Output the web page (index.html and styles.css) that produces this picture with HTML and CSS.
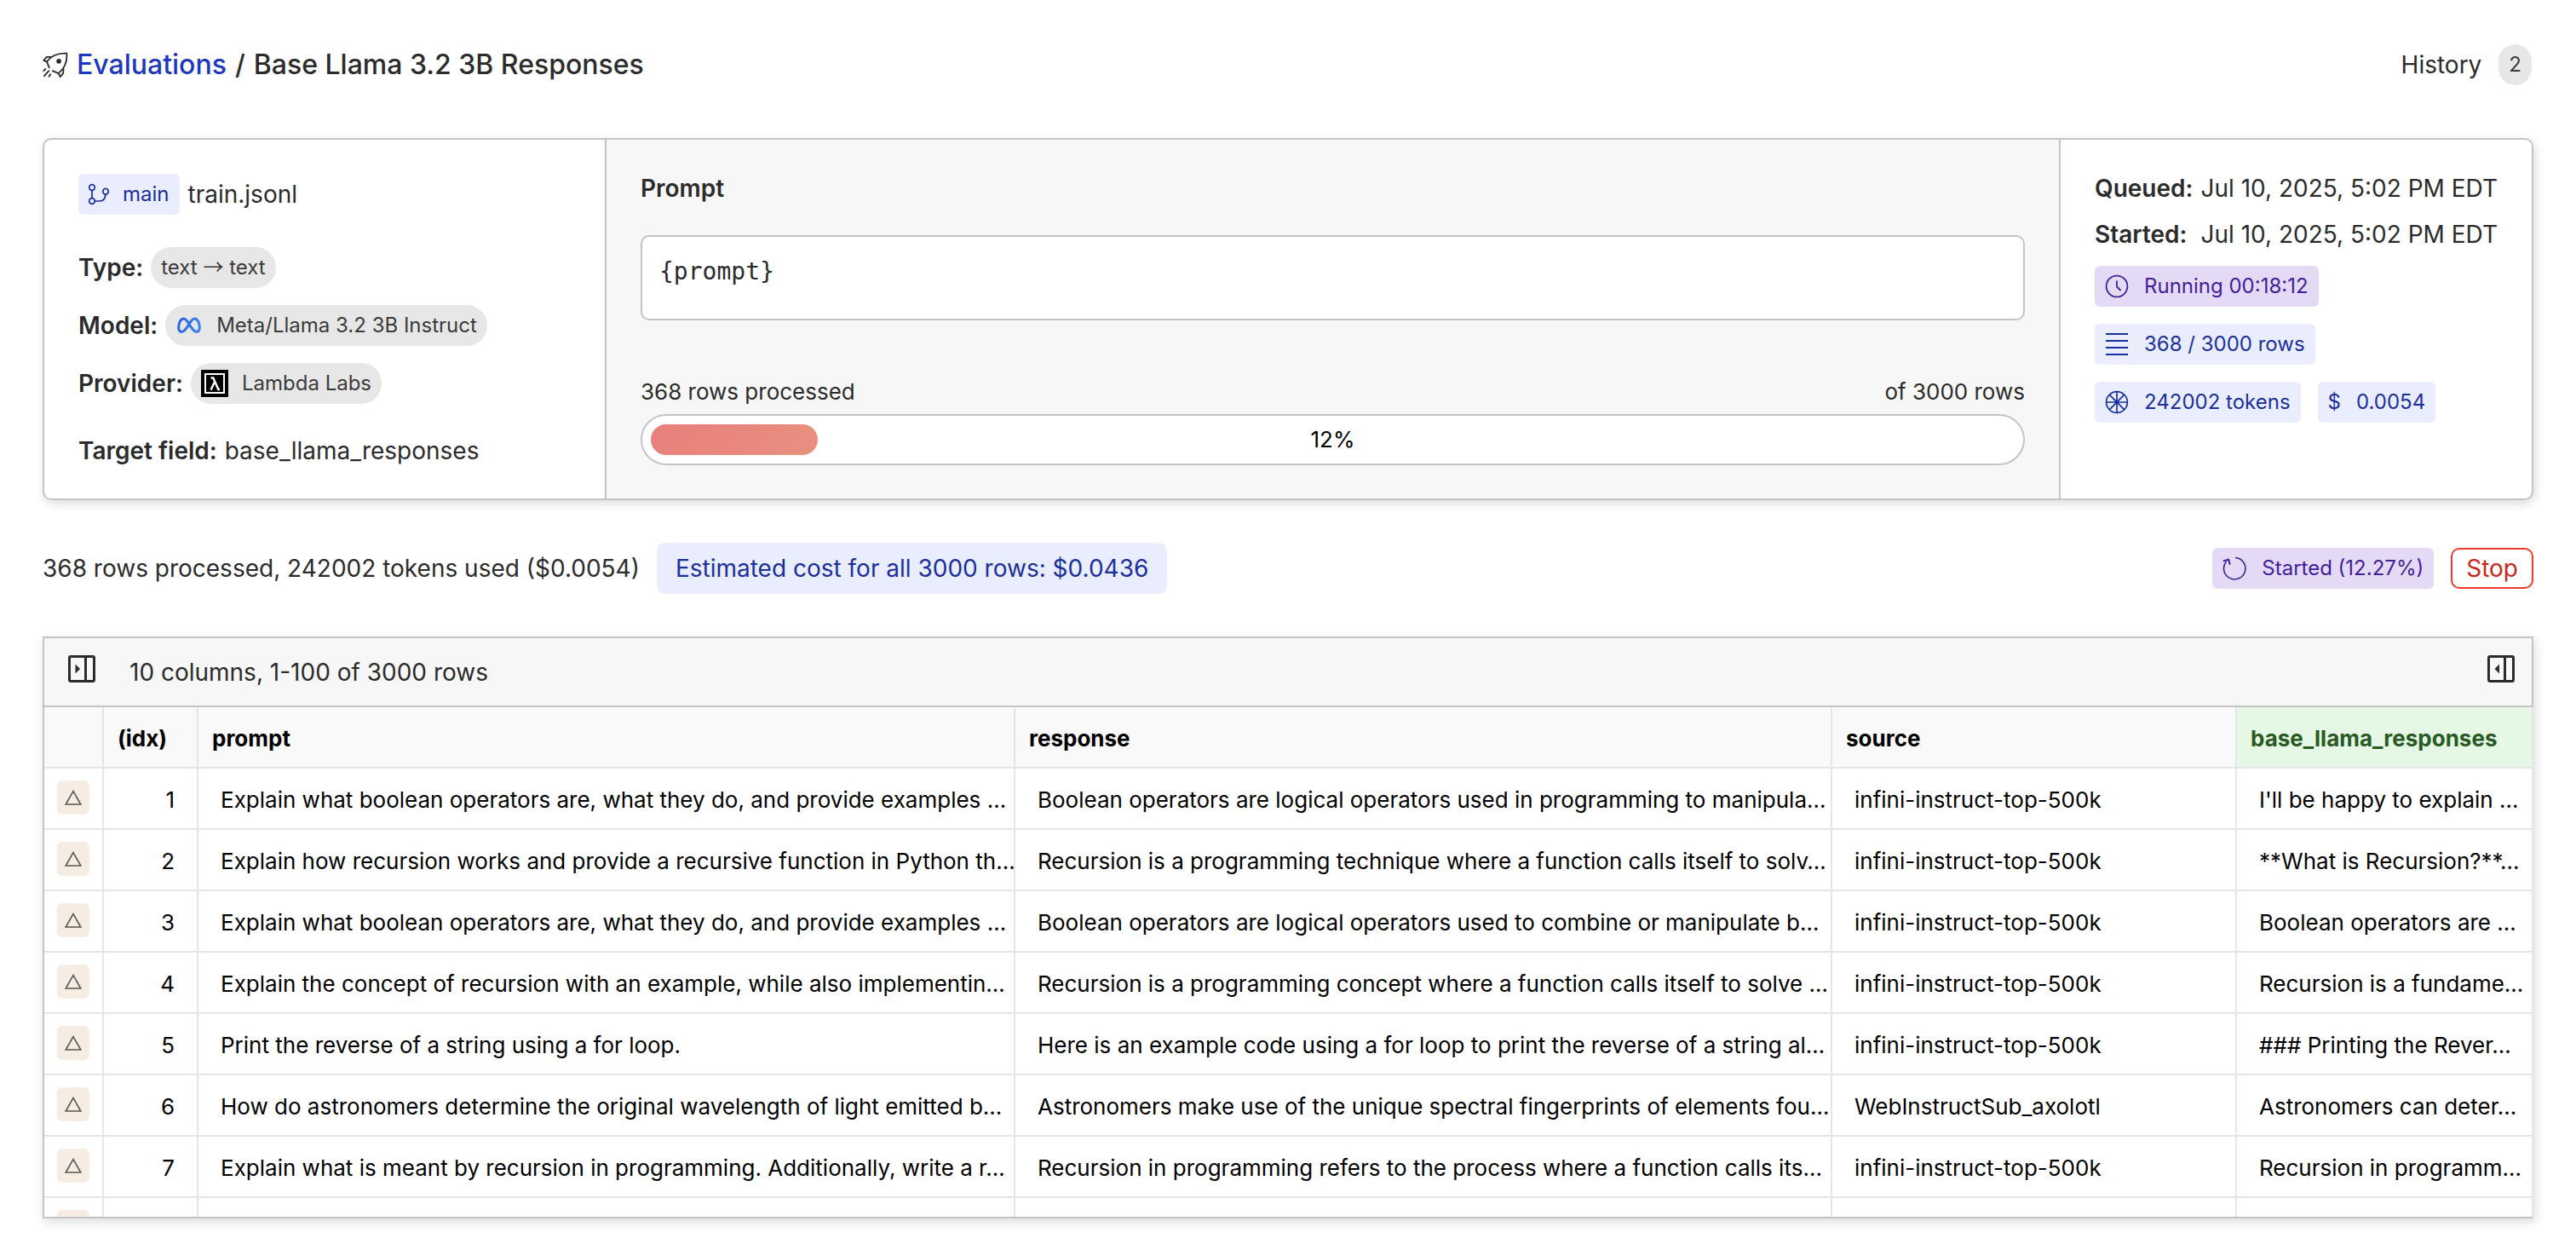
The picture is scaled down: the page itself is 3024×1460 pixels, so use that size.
FILE: index.html
```html
<!DOCTYPE html>
<html lang="en">
<head>
<meta charset="utf-8">
<title>Base Llama 3.2 3B Responses</title>
<link rel="stylesheet" href="styles.css">
</head>
<body>
<svg class="defs" aria-hidden="true">
  <symbol id="tri" viewBox="0 0 20 18"><path d="M10 1.6 18.8 17H1.2z" fill="none" stroke="#555" stroke-width="1.6"/></symbol>
</svg>
<main class="page">
  <header class="topbar">
    <h1 class="title">
      <svg class="rocket" viewBox="0 0 28 28" fill="none" stroke="#2b2b2b" stroke-width="1.7" stroke-linecap="round" stroke-linejoin="round" aria-hidden="true">
        <path d="M4.6 10.6C9 4.500 16 1 26.400 1.500 27.300 11 24 18 17.300 23.500"/>
        <path d="M9.500 5.500H4.400L1.200 9.200l3.400 1.400 2.700 6.600"/>
        <path d="M11 20.700l6.300 2.800 2 3.700 3.200-3.700.4-5"/>
        <circle cx="17.800" cy="10" r="1.800" fill="#2b2b2b"/>
        <path d="M1.200 20.700l1.800-2M1.800 26.300l5-5.600M7 26.800l1.600-2.400"/>
      </svg>
      <a class="crumb" href="#">Evaluations</a>
      <span>/</span>
      <span>Base Llama 3.2 3B Responses</span>
    </h1>
    <a class="history" href="#">History <span class="pill">2</span></a>
  </header>

  <section class="card">
    <div class="panel source">
      <div class="line file">
        <span class="badge branch">
          <svg class="icon" viewBox="0 0 28 28" fill="none" stroke="currentColor" stroke-width="1.7" aria-hidden="true">
            <circle cx="4" cy="6" r="3.300"/><circle cx="4" cy="22" r="3.300"/><circle cx="20" cy="10.700" r="3.300"/>
            <path d="M4 9.300v9.400M7.300 22H13c4 0 6.600-2.500 6.800-8"/>
          </svg>
          main
        </span>
        <span>train.jsonl</span>
      </div>
      <div class="facts">
        <div class="line"><b>Type:</b><span class="pill"><span>text <span class="arrow">→</span> text</span></span></div>
        <div class="line"><b>Model:</b>
          <span class="pill logo-pill">
            <svg class="logo" viewBox="-2 -6 32 32" fill="none" stroke="url(#metaBlue)" stroke-width="3" aria-hidden="true">
              <defs><linearGradient id="metaBlue" gradientUnits="userSpaceOnUse" x1="0" y1="0" x2="28" y2="8"><stop offset="0" stop-color="#2b62d8"/><stop offset="1" stop-color="#3b82f6"/></linearGradient></defs>
              <path d="M14 8.500C11.500 4 9.500 2 7.500 2 4 2 1.700 7.500 1.700 12.300c0 3.200 1.300 5.200 3.600 5.200C8 17.500 10 14.500 14 8.500 16.500 4 18.500 2 20.500 2c3.500 0 5.800 5.500 5.800 10.300 0 3.200-1.300 5.200-3.600 5.200C20 17.500 18 14.500 14 8.500z"/>
            </svg>
            Meta/Llama 3.2 3B Instruct
          </span>
        </div>
        <div class="line"><b>Provider:</b>
          <span class="pill logo-pill">
            <svg class="logo" viewBox="0 0 32 32" fill="none" aria-hidden="true">
              <path d="M0 0h32v32H0z" fill="#000"/>
              <path d="M5 5h22v22H5z" stroke="#fff" stroke-width="2"/>
              <path d="M11.500 9.500h2.800l6 13.500h1.700M15.800 14.500l-4.300 9" stroke="#fff" stroke-width="2.400"/>
            </svg>
            Lambda Labs
          </span>
        </div>
      </div>
      <div class="line"><b>Target field:</b><span>base_llama_responses</span></div>
    </div>

    <div class="panel run">
      <b class="run-title">Prompt</b>
      <div class="prompt">{prompt}</div>
      <div class="progress">
        <div class="progress-labels"><span>368 rows processed</span><span>of 3000 rows</span></div>
        <div class="track" role="progressbar" aria-valuenow="12" aria-valuemin="0" aria-valuemax="100">
          <div class="fill" style="width:12.27%"></div>
          <span class="percent">12%</span>
        </div>
      </div>
    </div>

    <div class="panel status">
      <dl class="times">
        <dt>Queued:</dt><dd>Jul 10, 2025, 5:02 PM EDT</dd>
        <dt>Started:</dt><dd>Jul 10, 2025, 5:02 PM EDT</dd>
      </dl>
      <span class="badge purple">
        <svg class="icon" viewBox="0 0 28 28" fill="none" stroke="currentColor" stroke-width="1.800" aria-hidden="true"><circle cx="14" cy="14" r="12.400"/><path d="M14 7.500v7l4.600 4.500"/></svg>
        Running 00:18:12
      </span>
      <span class="badge">
        <svg class="icon" viewBox="0 0 28 28" stroke="currentColor" stroke-width="2" aria-hidden="true"><path d="M1 2h26M1 10h26M1 18h26M1 26h26"/></svg>
        368 / 3000 rows
      </span>
      <div class="badges">
        <span class="badge">
          <svg class="icon" viewBox="0 0 28 28" fill="none" stroke="currentColor" stroke-width="1.700" aria-hidden="true"><circle cx="14" cy="14" r="12.400"/><path d="M14 1.600v24.800M1.600 14h24.800M5.200 5.200l17.600 17.600M22.800 5.200 5.200 22.800"/><circle cx="14" cy="14" r="1.500" fill="currentColor"/></svg>
          242002 tokens
        </span>
        <span class="badge"><span>$</span>0.0054</span>
      </div>
    </div>
  </section>

  <section class="summary">
    <span>368 rows processed, 242002 tokens used ($0.0054)</span>
    <span class="estimate">Estimated cost for all 3000 rows: $0.0436</span>
    <span class="badge purple state">
      <svg class="icon" viewBox="0 0 28 28" fill="none" stroke="currentColor" stroke-width="1.600" aria-hidden="true"><path d="M15 1.500A12.700 12.700 0 1 1 4.500 6"/><path d="M.8 5.500 7.200 3.800 8.800 9.800" stroke-width="2"/></svg>
      Started (12.27%)
    </span>
    <button class="stop" type="button">Stop</button>
  </section>

  <section class="grid">
    <div class="toolbar">
      <button class="toggle" type="button" aria-label="Expand columns">
        <svg viewBox="0 0 32 32" fill="none" stroke="#2b2b2b" stroke-width="3" aria-hidden="true"><rect x="1.500" y="1.500" width="29" height="29" rx="1.500"/><path d="M20.500 1v30"/><path d="M8.500 10.500v11l5.500-5.500z" fill="#2b2b2b" stroke="none"/></svg>
      </button>
      <span class="count">10 columns, 1-100 of 3000 rows</span>
      <button class="toggle" type="button" aria-label="Open side panel">
        <svg viewBox="0 0 32 32" fill="none" stroke="#2b2b2b" stroke-width="3" aria-hidden="true"><rect x="1.500" y="1.500" width="29" height="29" rx="1.500"/><path d="M20.500 1v30"/><path d="M14 10.500v11l-5.500-5.500z" fill="#2b2b2b" stroke="none"/></svg>
      </button>
    </div>
    <div class="scroll">
      <table class="data">
        <colgroup><col class="c-mark"><col class="c-idx"><col><col><col class="c-source"><col class="c-out"></colgroup>
        <thead><tr><th></th><th>(idx)</th><th>prompt</th><th>response</th><th>source</th><th class="target">base_llama_responses</th></tr></thead>
        <tbody>
          <tr><td class="mark"><button class="row-mark" type="button" aria-label="Open row 1"><svg><use href="#tri"/></svg></button></td><td class="idx">1</td><td>Explain what boolean operators are, what they do, and provide examples …</td><td>Boolean operators are logical operators used in programming to manipula…</td><td>infini-instruct-top-500k</td><td>I'll be happy to explain …</td></tr>
          <tr><td class="mark"><button class="row-mark" type="button" aria-label="Open row 2"><svg><use href="#tri"/></svg></button></td><td class="idx">2</td><td>Explain how recursion works and provide a recursive function in Python th…</td><td>Recursion is a programming technique where a function calls itself to solv…</td><td>infini-instruct-top-500k</td><td>**What is Recursion?**…</td></tr>
          <tr><td class="mark"><button class="row-mark" type="button" aria-label="Open row 3"><svg><use href="#tri"/></svg></button></td><td class="idx">3</td><td>Explain what boolean operators are, what they do, and provide examples …</td><td>Boolean operators are logical operators used to combine or manipulate b…</td><td>infini-instruct-top-500k</td><td>Boolean operators are …</td></tr>
          <tr><td class="mark"><button class="row-mark" type="button" aria-label="Open row 4"><svg><use href="#tri"/></svg></button></td><td class="idx">4</td><td>Explain the concept of recursion with an example, while also implementin…</td><td>Recursion is a programming concept where a function calls itself to solve …</td><td>infini-instruct-top-500k</td><td>Recursion is a fundame…</td></tr>
          <tr><td class="mark"><button class="row-mark" type="button" aria-label="Open row 5"><svg><use href="#tri"/></svg></button></td><td class="idx">5</td><td>Print the reverse of a string using a for loop.</td><td>Here is an example code using a for loop to print the reverse of a string al…</td><td>infini-instruct-top-500k</td><td>### Printing the Rever…</td></tr>
          <tr><td class="mark"><button class="row-mark" type="button" aria-label="Open row 6"><svg><use href="#tri"/></svg></button></td><td class="idx">6</td><td>How do astronomers determine the original wavelength of light emitted b…</td><td>Astronomers make use of the unique spectral fingerprints of elements fou…</td><td>WebInstructSub_axolotl</td><td>Astronomers can deter…</td></tr>
          <tr><td class="mark"><button class="row-mark" type="button" aria-label="Open row 7"><svg><use href="#tri"/></svg></button></td><td class="idx">7</td><td>Explain what is meant by recursion in programming. Additionally, write a r…</td><td>Recursion in programming refers to the process where a function calls its…</td><td>infini-instruct-top-500k</td><td>Recursion in programm…</td></tr>
          <tr><td class="mark"><button class="row-mark" type="button" aria-label="Open row 8"><svg><use href="#tri"/></svg></button></td><td class="idx"></td><td></td><td></td><td></td><td></td></tr>
        </tbody>
      </table>
    </div>
  </section>
</main>
</body>
</html>
```
FILE: styles.css
```css
:root {
  --text: #2b2b2b;
  --line: #c4c4c4;
  --cell-line: #e5e5e5;
  --blue: #1a309c;
  --blue-bg: #eaedfd;
  --purple: #43209a;
  --purple-bg: #e4daf6;
}

* { box-sizing: border-box; }

body {
  margin: 0;
  background: #fff;
  color: var(--text);
  font: 28px/34px Inter, "Liberation Sans", sans-serif;
}

b, dt { font-weight: 600; }
a { color: inherit; text-decoration: none; }
button { font: inherit; color: inherit; cursor: pointer; }
svg { display: block; flex: none; }
.defs { display: none; }

.page {
  display: flex;
  flex-direction: column;
  height: 100vh;
  padding: 52px 50px 30px;
}

/* Header */
.topbar {
  display: flex;
  justify-content: space-between;
  align-items: center;
  height: 48px;
  margin-bottom: 62px;
  padding-right: 2px;
}
.title {
  display: flex;
  align-items: center;
  gap: 10px;
  margin: 0;
  font-size: 32px;
  font-weight: 500;
}
.rocket { width: 30px; height: 30px; }
.crumb { color: #1c38bb; }
.history { display: flex; align-items: center; gap: 20px; }

.pill {
  display: inline-flex;
  align-items: center;
  height: 48px;
  padding: 0 12px;
  border-radius: 24px;
  background: #e7e7e7;
  color: #3b3b3b;
  font-size: 24px;
}
.arrow { font-family: "Noto Sans CJK JP", sans-serif; line-height: 1; }
.logo-pill { gap: 16px; }
.logo { width: 32px; height: 32px; }

.badge {
  display: inline-flex;
  align-items: center;
  gap: 18px;
  height: 48px;
  padding: 0 12px;
  border-radius: 6px;
  background: var(--blue-bg);
  color: var(--blue);
  font-size: 24px;
}
.badge.purple { background: var(--purple-bg); color: var(--purple); }
.icon { width: 28px; height: 28px; }

/* Run overview */
.card {
  display: grid;
  grid-template-columns: 658px minmax(0, 1fr) auto;
  margin-bottom: 50px;
  border: 2px solid var(--line);
  border-radius: 10px;
  box-shadow: 2px 4px 12px rgba(0, 0, 0, .14);
}
.panel { display: flex; flex-direction: column; padding: 40px 40px 39px; }
.panel + .panel { border-left: 2px solid var(--line); }
.source { gap: 38px; }
.line { display: flex; align-items: center; gap: 9px; }
.file { gap: 10px; }
.badge.branch { gap: 12px; }
.facts { display: flex; flex-direction: column; gap: 20px; }

.run { background: #f7f7f7; }
.prompt {
  height: 100px;
  margin-top: 38px;
  padding: 24px 20px;
  border: 2px solid var(--line);
  border-radius: 10px;
  background: #fff;
  font-family: "DejaVu Sans Mono", monospace;
}
.progress { margin-top: auto; }
.progress-labels {
  display: flex;
  justify-content: space-between;
  margin-bottom: 9px;
  font-size: 26px;
}
.track {
  display: grid;
  align-items: center;
  height: 60px;
  padding: 0 10px;
  border: 2px solid var(--line);
  border-radius: 30px;
  background: #fff;
}
.fill, .percent { grid-area: 1 / 1; }
.fill {
  height: 36px;
  border-radius: 18px;
  background: linear-gradient(135deg, #e77f7b, #e9907f);
}
.percent { justify-self: center; color: #000; font-size: 26px; }

.status { align-items: flex-start; gap: 20px; }
.times {
  display: grid;
  grid-template-columns: auto auto;
  gap: 20px 9px;
  margin: 0;
}
.times dd { margin: 0; }
.badges { display: flex; gap: 20px; }

/* Summary */
.summary {
  display: flex;
  align-items: center;
  gap: 20px;
  margin-bottom: 50px;
}
.estimate {
  padding: 13px 22px;
  border-radius: 10px;
  background: var(--blue-bg);
  color: var(--blue);
}
.state { margin-left: auto; }
.stop {
  height: 48px;
  padding: 0 16px;
  border: 2px solid #f03a2d;
  border-radius: 10px;
  background: #fff;
  color: #c5281c;
  line-height: 40px;
}

/* Data grid */
.grid {
  display: flex;
  flex: 1;
  flex-direction: column;
  min-height: 0;
  border: solid var(--line);
  border-width: 2px 0 2px 2px;
  box-shadow: 2px 4px 12px rgba(0, 0, 0, .14);
}
.toolbar {
  display: flex;
  flex: none;
  align-items: center;
  height: 81px;
  padding: 0 20px 0 28px;
  border: solid var(--line);
  border-width: 0 2px 2px 0;
  background: #f7f7f7;
}
.count { flex: 1; margin-left: 40px; }
.toggle { padding: 0 0 8px; border: 0; background: none; }
.toggle svg { width: 32px; height: 32px; }

.scroll { flex: 1; min-height: 0; overflow: auto; scrollbar-width: none; }
.data {
  width: 100%;
  table-layout: fixed;
  border-collapse: separate;
  border-spacing: 0;
  color: #000;
  font-size: 26px;
}
.c-mark { width: 70px; }
.c-idx { width: 111px; }
.c-source { width: 475px; }
.c-out { width: 348px; }
.data th, .data td {
  height: 72px;
  border: solid var(--cell-line);
  border-width: 0 2px 2px 0;
  overflow: hidden;
  text-align: left;
  white-space: nowrap;
}
.data th {
  position: sticky;
  top: 0;
  padding: 3px 16px 0;
  background: #f9f9f9;
  font-weight: 700;
}
.data th.target { background: #e5f7e5; color: #2a5a24; }
.data td { padding: 3px 0 0 26px; background: #fff; }
.data td.idx { padding-right: 26px; text-align: right; }
.data td.mark { padding: 0 0 2px 15px; }
.row-mark {
  display: grid;
  place-items: center;
  width: 38px;
  height: 40px;
  padding: 0;
  border: 0;
  border-radius: 6px;
  background: #f6ece1;
}
.row-mark svg { width: 20px; height: 18px; }
```
